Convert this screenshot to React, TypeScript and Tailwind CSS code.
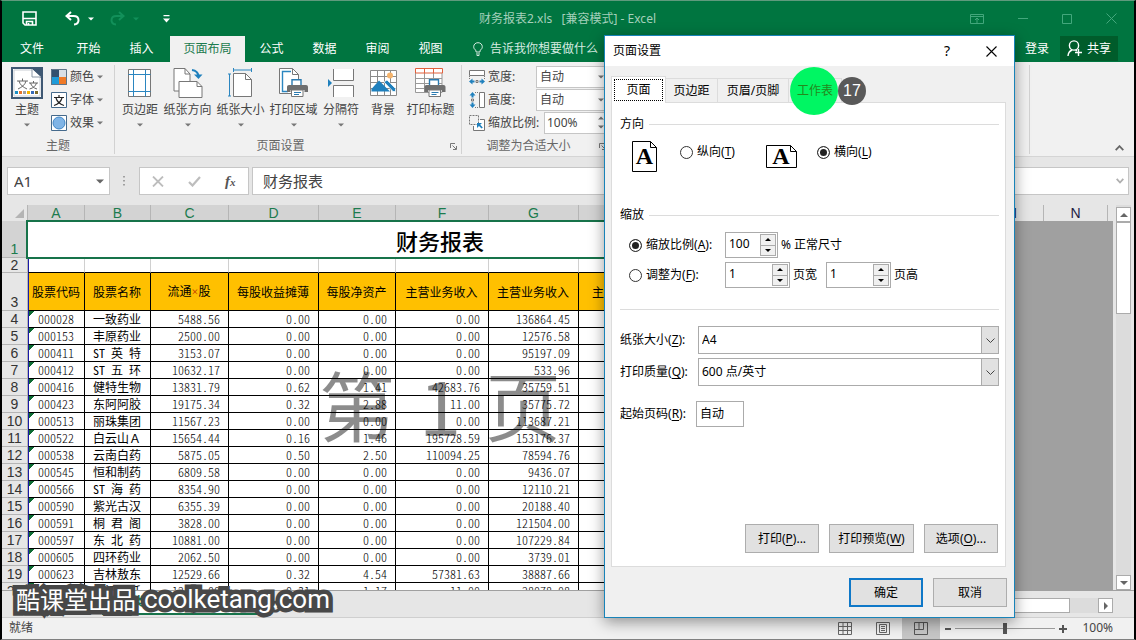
import type { ReactNode } from "react";
import clsx from "clsx";

const COLUMNS = ["A", "B", "C", "D", "E", "F", "G", "H", "I", "J", "K", "L", "M", "N"];

const HEADINGS = ["股票代码", "股票名称", "流通×股", "每股收益摊薄", "每股净资产", "主营业务收入", "主营业务收入", "主营业务利润", "", ""];

const ROWS = [
    ["000028", "一致药业", "5488.56", "0.00", "0.00", "0.00", "136864.45"],
    ["000153", "丰原药业", "2500.00", "0.00", "0.00", "0.00", "12576.58"],
    ["000411", "ST 英 特", "3153.07", "0.00", "0.00", "0.00", "95197.09"],
    ["000412", "ST 五 环", "10632.17", "0.00", "0.00", "0.00", "533.96"],
    ["000416", "健特生物", "13831.79", "0.62", "1.41", "42683.76", "35759.51"],
    ["000423", "东阿阿胶", "19175.34", "0.32", "2.88", "11.00", "35775.72"],
    ["000513", "丽珠集团", "11567.23", "0.00", "0.00", "0.00", "113687.21"],
    ["000522", "白云山Ａ", "15654.44", "0.16", "1.46", "195728.59", "153176.37"],
    ["000538", "云南白药", "5875.05", "0.50", "2.50", "110094.25", "78594.76"],
    ["000545", "恒和制药", "6809.58", "0.00", "0.00", "0.00", "9436.07"],
    ["000566", "ST 海 药", "8354.90", "0.00", "0.00", "0.00", "12110.21"],
    ["000590", "紫光古汉", "6355.39", "0.00", "0.00", "0.00", "20188.40"],
    ["000591", "桐 君 阁", "3828.00", "0.00", "0.00", "0.00", "121504.00"],
    ["000597", "东 北 药", "10881.00", "0.00", "0.00", "0.00", "107229.84"],
    ["000605", "四环药业", "2062.50", "0.00", "0.00", "0.00", "3739.01"],
    ["000623", "吉林敖东", "12529.66", "0.32", "4.54", "57381.63", "38887.66"],
    ["000650", "九江化纤", "12144.00", "0.31", "1.17", "11.00", "28078.08"],
];

const RIBBON_TABS = ["文件", "开始", "插入", "页面布局", "公式", "数据", "审阅", "视图"];

function Caret({ className }: { className?: string }) {
    return (
        <svg width="6" height="4" viewBox="0 0 6 4" className={className} fill="currentColor">
            <path d="M0 .5h6L3 3.5z" />
        </svg>
    );
}

/* ---------- Title bar + tabs ---------- */

function TitleBar() {
    return (
        <div className="flex h-[35px] items-center bg-[#007540] text-white">
            <button aria-label="保存" className="ml-5">
                <svg width="15" height="15" viewBox="0 0 15 15" fill="none" stroke="currentColor" strokeWidth="1.6">
                    <path d="M1 1h13v13H3L1 12z" />
                    <path d="M1 7.500h13M4.500 14v-3.500h6V14" />
                    <path d="M6.500 12v2" />
                </svg>
            </button>
            <button aria-label="撤消" className="ml-7">
                <svg width="15" height="15" viewBox="0 0 15 15" fill="none" stroke="currentColor" strokeWidth="2">
                    <path d="M6 1L1.500 5 6 9" />
                    <path d="M2 5h6.500c3 0 5 1.500 5 4.300 0 2.500-2 4-4.500 4.200" />
                </svg>
            </button>
            <Caret className="ml-2" />
            <button aria-label="恢复" className="ml-4 text-[#12905a]">
                <svg width="15" height="15" viewBox="0 0 15 15" fill="none" stroke="currentColor" strokeWidth="2">
                    <path d="M9 1l4.500 4L9 9" />
                    <path d="M13 5H6.500c-3 0-5 1.500-5 4.300 0 2.500 2 4 4.500 4.200" />
                </svg>
            </button>
            <Caret className="ml-2 text-[#12905a]" />
            <button aria-label="自定义快速访问工具栏" className="ml-6">
                <svg width="7" height="8" viewBox="0 0 7 8" fill="currentColor">
                    <path d="M.5 0h6v1.300h-6zM0 3.500h7L3.500 7.500z" />
                </svg>
            </button>
            <h1 className="ml-auto mr-[314px] whitespace-pre text-xs text-[#a4d0bb]">财务报表2.xls&nbsp;&nbsp; [兼容模式] - Excel</h1>
            <div className="mr-[17px] flex items-center gap-[34px] text-[#43a77c]">
                <svg width="14" height="10" viewBox="0 0 14 10" fill="none" stroke="currentColor">
                    <path d="M.5.5h13v9H.5zM.5 2.500h13M7 9V4.500M5 6l2-2 2 2" />
                </svg>
                <svg width="10" height="10" viewBox="0 0 10 10" stroke="currentColor"><path d="M0 4.500h10" /></svg>
                <svg width="10" height="10" viewBox="0 0 10 10" fill="none" stroke="currentColor"><path d="M.5.5h9v9h-9z" /></svg>
                <svg width="11" height="11" viewBox="0 0 11 11" stroke="currentColor"><path d="M.5.5l10 10M10.500.5l-10 10" /></svg>
            </div>
        </div>
    );
}

function TabBar() {
    return (
        <nav className="flex h-[26px] items-stretch bg-[#007540] text-xs text-white">
            {RIBBON_TABS.map((tab) => (
                <a
                    key={tab}
                    href="#"
                    className={clsx(
                        "flex items-center justify-center",
                        tab === "文件" ? "w-[60px]" : tab === "页面布局" ? "ml-0.5 w-[75px]" : "w-[53px]",
                        tab === "页面布局" && "bg-[#f1f1f1] text-[#1c7b4e]"
                    )}
                >
                    {tab}
                </a>
            ))}
            <a href="#" className="ml-4 flex items-center gap-[7px] text-[#d5ebe0]">
                <svg width="10" height="14" viewBox="0 0 10 14" fill="none" stroke="currentColor">
                    <path d="M3 10V8.500C1.500 7.500.7 6.300.7 4.700.7 2.300 2.600.7 5 .7s4.300 1.600 4.300 4c0 1.600-.8 2.800-2.300 3.800V10zM3 12h4M3.700 13.500h2.600" />
                </svg>
                告诉我你想要做什么
            </a>
            <a href="#" className="ml-auto flex items-center">登录</a>
            <button className="mb-px ml-[11px] mr-4 flex w-[58px] items-center justify-center gap-1 bg-[#005c2b]">
                <svg width="16" height="17" viewBox="0 0 16 17" fill="none" stroke="currentColor" strokeWidth="1.400">
                    <circle cx="7" cy="5.500" r="4.600" />
                    <path d="M1 16c.2-3 1.700-5 4-6M8.500 10l1.500.8M8 12.500h7M11.500 9v7" />
                </svg>
                共享
            </button>
        </nav>
    );
}

/* ---------- Ribbon ---------- */

function BigButton({ label, wide, noCaret, children }: { label: string; wide?: boolean; noCaret?: boolean; children: ReactNode }) {
    return (
        <button className={clsx("flex flex-col items-center", wide ? "w-[53px]" : "w-[42px]")}>
            <span className="flex h-9 items-center justify-center">{children}</span>
            <span className="h-[18px] whitespace-nowrap leading-[18px]">{label}</span>
            {!noCaret && <Caret className="mt-1 text-[#777]" />}
        </button>
    );
}

function Launcher() {
    return (
        <svg width="7" height="7" viewBox="0 0 7 7" fill="none" stroke="#777">
            <path d="M.5 5V.5H5M2.500 2.500l3.500 3.500M6.500 3v3.500H3" />
        </svg>
    );
}

function Printer({ x, y }: { x: number; y: number }) {
    return (
        <g transform={`translate(${x} ${y})`}>
            <path d="M5 .7h9V7H5z" fill="#fff" stroke="#2a7ab0" strokeWidth="1.400" />
            <path d="M2 6h17c1.200 0 2 .8 2 2v5h-3.500v-2h-14v2H0V8c0-1.200.8-2 2-2z" fill="#6f6f6f" />
            <path d="M4.500 11h11.500v6.500H4.500z" fill="#fff" stroke="#777" />
            <path d="M7 13.500h7M7 15.500h5" stroke="#2a7ab0" />
        </g>
    );
}

function ThemeGroup() {
    return (
        <div className="flex w-[113px] flex-col border-r border-[#d2d2d2]">
            <div className="flex h-[70px]">
                <button className="ml-[9px] flex w-8 flex-col items-center">
                    <svg width="32" height="32" viewBox="0 0 32 32" className="mb-0.5 mt-0.5">
                        <path d="M1 1h30v30H1z" fill="#fff" stroke="#3f5873" strokeWidth="2" />
                        <path d="M3 3h26v26H3z" fill="none" stroke="#c9ced4" />
                        <path d="M21 2h9v9z" fill="#3f5873" />
                        <path d="M21 2v8h9" fill="#fff" stroke="#8a97a5" />
                        <path d="M6 14h11M11.500 11.500V14M8 14c1 4 4 6 8 8M15 14c-1 4-4 6-8 8M18 16h9M22.500 14v2M19.500 16c1 3 3 5 6.500 6M25.500 16c-1 3-3 5-7 6" fill="none" stroke="#666" />
                        <path d="M4 24h3v3H4z" fill="#1b8fc4" />
                        <path d="M8 24h3v3H8z" fill="#e8762c" />
                        <path d="M12 24h3v3h-3z" fill="#a0a0a0" />
                        <path d="M16 24h3v3h-3z" fill="#f4b400" />
                        <path d="M20 24h3v3h-3z" fill="#3569b8" />
                        <path d="M24 24h3v3h-3z" fill="#7a6a2a" />
                    </svg>
                    <span className="h-[18px] leading-[18px]">主题</span>
                    <Caret className="mt-1 text-[#777]" />
                </button>
                <div className="ml-2 flex flex-col">
                    <button className="flex h-[23px] items-center gap-[3px]">
                        <svg width="16" height="16" viewBox="0 0 16 16">
                            <path d="M0 0h8v8H0z" fill="#33516f" /><path d="M8 0h8v8H8z" fill="#d9dfe6" />
                            <path d="M0 8h8v8H0z" fill="#1f9bd8" /><path d="M8 8h8v8H8z" fill="#f07a28" />
                            <path d="M.5.5h15v15H.5z" fill="none" stroke="#5f7488" />
                        </svg>
                        颜色<Caret className="text-[#777]" />
                    </button>
                    <button className="flex h-[23px] items-center gap-[3px]">
                        <svg width="16" height="16" viewBox="0 0 16 16" fill="none">
                            <path d="M.5.5h15v15H.5z" fill="#fff" stroke="#456a8c" />
                            <path d="M3 5.500h10M8 3v2.500M5 6c1 3.500 3.500 6 8 7.500M11 6c-1 3.500-3.500 6-8 7.500" stroke="#222" strokeWidth="1.200" />
                        </svg>
                        字体<Caret className="text-[#777]" />
                    </button>
                    <button className="flex h-[23px] items-center gap-[3px]">
                        <svg width="16" height="16" viewBox="0 0 16 16">
                            <path d="M.5.5h15v15H.5z" fill="#fff" stroke="#456a8c" />
                            <circle cx="8" cy="8" r="6" fill="#7fb4e6" stroke="#3f86c6" />
                        </svg>
                        效果<Caret className="text-[#777]" />
                    </button>
                </div>
            </div>
            <div className="mt-auto h-4 text-center leading-4 text-[#666]">主题</div>
        </div>
    );
}

function PageSetupGroup() {
    return (
        <div className="flex w-[347px] flex-col border-r border-[#d2d2d2]">
            <div className="ml-1 flex">
                <BigButton label="页边距">
                    <svg width="24" height="28" viewBox="0 0 24 28" fill="none">
                        <path d="M.5.5h22v27H.5z" fill="#fff" stroke="#777" />
                        <path d="M5.500.5v27M17.500.5v27M.5 5.500h22M.5 22.500h22" stroke="#2b86c0" />
                    </svg>
                </BigButton>
                <BigButton label="纸张方向" wide>
                    <svg width="30" height="30" viewBox="0 0 30 30" fill="#fff" stroke="#777">
                        <path d="M1 .5h11l5 5.500v17H1z" /><path d="M12 .5V6h5" fill="none" />
                        <path d="M6 13.500h18l5 5v11H6z" /><path d="M24 13.500v5h5" fill="none" />
                        <path d="M19 2c4 .5 6 2.500 6.500 6" fill="none" stroke="#1f80bd" strokeWidth="2.200" />
                        <path d="M21 6.500h8.500L25.500 11z" fill="#1f80bd" stroke="none" />
                    </svg>
                </BigButton>
                <BigButton label="纸张大小" wide>
                    <svg width="25" height="30" viewBox="0 0 25 30" fill="none">
                        <path d="M5.500 5.500h12l6 6v17h-18z" fill="#fff" stroke="#777" /><path d="M17.500 5.500v6h6" stroke="#777" />
                        <path d="M5.500 2h18M5.500 0v4M23.500 0v4M1.500 6v22M0 6h3M0 28h3" stroke="#2b86c0" />
                    </svg>
                </BigButton>
                <BigButton label="打印区域" wide>
                    <svg width="30" height="30" viewBox="0 0 30 30" fill="none">
                        <path d="M.5.5h13l6 6v19H.5z" fill="#fff" stroke="#777" /><path d="M13.500.5v6h6" stroke="#777" />
                        <path d="M12 3.500H3.500v20H9" stroke="#2b86c0" strokeWidth="1.400" />
                        <Printer x={8} y={11} />
                    </svg>
                </BigButton>
                <BigButton label="分隔符">
                    <svg width="27" height="28" viewBox="0 0 27 28" fill="none" stroke="#777">
                        <path d="M5.500 0v11.500h20V0" fill="#fff" /><path d="M5.500 28V16.500h20V28" fill="#fff" />
                        <path d="M0 10l4 4-4 4z" fill="#1f80bd" stroke="none" />
                    </svg>
                </BigButton>
                <BigButton label="背景" noCaret>
                    <svg width="27" height="26" viewBox="0 0 27 26" fill="none">
                        <path d="M.5.5h26v25H.5zM.5 6.500h26M.5 12.500h26M.5 18.500h26M7.500.5v25M14.500.5v25M20.500.5v25" fill="#fff" stroke="#8a8a8a" />
                        <circle cx="20" cy="5.500" r="3" fill="#f5b46c" />
                        <path d="M1.500 21.500V19L9 10.500l11 11z" fill="#1f80bd" />
                        <path d="M14 12l3-2 8.500 8.500v3H23z" fill="#1f80bd" stroke="#fff" strokeWidth=".7" />
                    </svg>
                </BigButton>
                <BigButton label="打印标题" wide noCaret>
                    <svg width="31" height="30" viewBox="0 0 31 30" fill="none">
                        <path d="M.5 5v19.500H27V5M.5 10.500H27M.5 15.500H27M.5 20.500H27M9.500 5v20M18.500 5v20" fill="#fff" stroke="#999" />
                        <path d="M.5.5h27v4.500H.5zM9.500.5V5M18.500.5V5" stroke="#e0603c" fill="#fff" />
                        <Printer x={9.5} y={11} />
                    </svg>
                </BigButton>
            </div>
            <div className="mt-auto flex h-4 items-center leading-4 text-[#666]">
                <span className="flex-1 pr-1 text-center">页面设置</span>
                <button aria-label="页面设置启动器" className="mr-1"><Launcher /></button>
            </div>
        </div>
    );
}

function ScaleGroup() {
    return (
        <div className="flex w-36 flex-col">
            <label className="flex h-[23px] items-center pl-[7px]">
                <svg width="16" height="16" viewBox="0 0 16 16" fill="none" stroke="#777">
                    <path d="M.5 1.500h15v5H.5z" fill="#fff" /><path d="M.5 7v3M15.500 7v3" strokeDasharray="1 1" />
                    <path d="M0 12.500l3.500-3v2h2v2h-2v2zM16 12.500l-3.500-3v2h-2v2h2v2z" fill="#1f80bd" stroke="none" />
                    <path d="M7 11.500h2v2H7z" />
                </svg>
                <span className="ml-[3px] w-12">宽度:</span>
                <select defaultValue="自动" className="h-[22px] flex-1 appearance-none border border-[#c6c6c6] bg-white px-[3px] leading-5">
                    <option>自动</option>
                </select>
                <Caret className="pointer-events-none -ml-2 mr-0.5 text-[#777]" />
            </label>
            <label className="flex h-[23px] items-center pl-[7px]">
                <svg width="16" height="16" viewBox="0 0 16 16" fill="none" stroke="#777">
                    <path d="M10.500.5h5v15h-5z" fill="#fff" /><path d="M6 .5h4M6 15.500h4" strokeDasharray="1 1" />
                    <path d="M3.500 0l3 3.500h-2v2h-2v-2h-2zM3.500 16l3-3.500h-2v-2h-2v2h-2z" fill="#1f80bd" stroke="none" />
                    <path d="M2.500 7h2v2h-2z" />
                </svg>
                <span className="ml-[3px] w-12">高度:</span>
                <select defaultValue="自动" className="h-[22px] flex-1 appearance-none border border-[#c6c6c6] bg-white px-[3px] leading-5">
                    <option>自动</option>
                </select>
                <Caret className="pointer-events-none -ml-2 mr-0.5 text-[#777]" />
            </label>
            <label className="flex h-[23px] items-center pl-[7px]">
                <svg width="16" height="16" viewBox="0 0 16 16" fill="none" stroke="#777">
                    <path d="M11 4.500h4.500v11h-11V11" fill="#fff" />
                    <path d="M.5.5h9v9h-9z" strokeDasharray="2 1" />
                    <path d="M8 8h5l-1.800 1.800 2.600 2.600-1.200 1.200L10 11l-2 2z" fill="#1f80bd" stroke="none" />
                </svg>
                <span className="ml-[3px] w-14">缩放比例:</span>
                <input defaultValue="100%" className="h-[22px] w-0 flex-1 border border-[#c6c6c6] bg-white px-0.5" />
                <svg width="6" height="13" viewBox="0 0 6 13" fill="#777" className="-ml-2 mr-0.5"><path d="M0 3.500h6L3 .5zM0 9.500h6l-3 3z" /></svg>
            </label>
            <div className="mt-auto flex h-4 items-center leading-4 text-[#666]">
                <span className="flex-1 pr-1 text-center">调整为合适大小</span>
                <button aria-label="调整启动器"><Launcher /></button>
            </div>
        </div>
    );
}

function Ribbon() {
    return (
        <div className="flex h-[95px] items-stretch border-b border-[#d5d5d5] bg-[#f1f1f1] pb-0.5 pt-[3px] text-xs text-[#444]">
            <ThemeGroup />
            <PageSetupGroup />
            <ScaleGroup />
            <div className="flex-1 border-r border-[#d2d2d2]" />
            <div className="flex w-[104px] items-end justify-end">
                <button aria-label="折叠功能区" className="mb-[3px] mr-2.5">
                    <svg width="9" height="6" viewBox="0 0 9 6" fill="none" stroke="#666" strokeWidth="1.800"><path d="M.7 5.200l3.800-4 3.800 4" /></svg>
                </button>
            </div>
        </div>
    );
}

/* ---------- Formula bar ---------- */

function FormulaBar() {
    return (
        <div className="flex h-12 items-center bg-[#e6e6e6] pl-[5px] pr-[5px] text-[15px] text-[#444]">
            <div className="flex h-7 w-[103px] items-center border border-[#c6c6c6] bg-white pr-[5px]">
                <input aria-label="名称框" defaultValue="A1" className="w-0 flex-1 pl-1.5" />
                <svg width="8" height="5" viewBox="0 0 8 5" fill="#666"><path d="M0 .5h8l-4 4z" /></svg>
            </div>
            <svg width="2" height="12" viewBox="0 0 2 12" fill="#a0a0a0" className="ml-[13px] mr-[14px]">
                <path d="M0 1h2v1.500H0zM0 5h2v1.500H0zM0 9h2v1.500H0z" />
            </svg>
            <div className="flex h-7 w-[110px] items-center border border-[#c6c6c6] bg-white pl-3">
                <svg width="12" height="11" viewBox="0 0 12 11" fill="none" stroke="#bdbdbd" strokeWidth="1.800"><path d="M1 .5l10 10M11 .5l-10 10" /></svg>
                <svg width="13" height="11" viewBox="0 0 13 11" fill="none" stroke="#bdbdbd" strokeWidth="2.200" className="ml-6"><path d="M1 6l3.500 3.500L12 1" /></svg>
                <span className="ml-6 font-['Liberation_Serif'] text-[15px] font-bold italic leading-none text-[#555]">f<span className="text-[11px]">x</span></span>
            </div>
            <div className="ml-[3px] flex h-7 flex-1 items-center border border-[#c6c6c6] bg-white pr-1">
                <input aria-label="编辑栏" defaultValue="财务报表" className="w-0 flex-1 pl-2.5" />
                <svg width="8" height="6" viewBox="0 0 8 6" fill="none" stroke="#b0b0b0" strokeWidth="1.800"><path d="M.7.8L4 4.500 7.300.8" /></svg>
            </div>
        </div>
    );
}

/* ---------- Sheet ---------- */

function RowHead({ n, active, low }: { n: number; active?: boolean; low?: boolean }) {
    return (
        <th
            className={clsx(
                "border-b border-r border-[#b5b5b5] p-0 text-center font-['Liberation_Sans'] text-sm font-normal leading-[14px]",
                active ? "bg-[#d3d3d3] text-[#1c7b4e]" : "bg-[#e6e6e6] text-[#333]",
                low ? "pb-px align-bottom" : "align-middle"
            )}
        >
            {n}
        </th>
    );
}

function Grid() {
    return (
        <div className="relative h-full flex-1 overflow-hidden bg-[#a0a0a0]">
            <table className="w-full table-fixed border-separate border-spacing-0 font-['Noto_Sans_CJK_SC',sans-serif] text-xs text-black">
                <colgroup>
                    <col className="w-[26px]" />
                    <col className="w-[57px]" />
                    <col className="w-[66px]" />
                    <col className="w-[78px]" />
                    <col className="w-[90px]" />
                    <col className="w-[77px]" />
                    <col className="w-[93px]" />
                    <col className="w-[90px]" />
                    <col className="w-[100px]" />
                    <col className="w-[86px]" />
                    <col className="w-[87px]" />
                    <col className="w-[64px]" />
                    <col className="w-[63px]" />
                    <col className="w-[65px]" />
                    <col className="w-[64px]" />
                    <col />
                </colgroup>
                <thead>
                    <tr className="font-['Liberation_Sans'] text-sm leading-4">
                        <th className="h-4 border-r border-[#b5b5b5] bg-[#e6e6e6] p-0">
                            <svg width="9" height="9" viewBox="0 0 9 9" fill="#b4b4b4" className="ml-auto mr-[3px]"><path d="M9 0v9H0z" /></svg>
                        </th>
                        {COLUMNS.map((c, i) => (
                            <th key={c} className={clsx("border-r border-[#b5b5b5] p-0 font-normal", i < 10 ? "bg-[#d3d3d3] text-[#1c7b4e]" : "bg-[#e6e6e6] text-[#222244]")}>
                                {c}
                            </th>
                        ))}
                        <th className="bg-[#e6e6e6] p-0" />
                    </tr>
                </thead>
                <tbody>
                    <tr>
                        <RowHead n={1} active low />
                        <td colSpan={10} className="relative h-[37px] bg-white p-0 text-center text-[22px] font-medium leading-9">
                            财务报表
                            <span className="absolute -bottom-px -left-0.5 -top-px right-0 border-2 border-[#17734a]" />
                        </td>
                        <td colSpan={5} rowSpan={ROWS.length + 3} className="p-0" />
                    </tr>
                    <tr>
                        <RowHead n={2} />
                        {HEADINGS.map((_, i) => (
                            <td key={i} className={clsx("h-[15px] border-b border-r border-b-black border-r-[#d0d0d0] bg-white p-0", i === 0 && "border-l border-l-[#1a1aa8]")} />
                        ))}
                    </tr>
                    <tr>
                        <RowHead n={3} low />
                        {HEADINGS.map((h, i) => (
                            <td key={i} className={clsx("h-[38px] whitespace-nowrap border-b border-r border-black bg-[#ffc000] p-0 pr-px text-center", i === 0 && "border-l border-l-[#1a1aa8]")}>
                                {h.split("×")[0]}
                                {h.includes("×") && <><span className="font-['Liberation_Serif'] text-[#c03000]">×</span>{h.split("×")[1]}</>}
                            </td>
                        ))}
                    </tr>
                    {ROWS.map((row, r) => (
                        <tr key={row[0]}>
                            <RowHead n={r + 4} />
                            {HEADINGS.map((_, i) => (
                                <td
                                    key={i}
                                    className={clsx(
                                        "h-[17px] whitespace-pre border-b border-r border-black bg-white p-0 leading-4",
                                        i === 0 && "border-l border-l-[#1a1aa8] bg-[linear-gradient(135deg,#0d6b33_4px,transparent_4px)]",
                                        i < 2 ? "pr-px text-center" : "pr-2 text-right",
                                        i !== 1 && "font-light",
                                        !row[i]?.includes("Ａ") && "[font-feature-settings:'hwid']"
                                    )}
                                >
                                    {row[i]}
                                </td>
                            ))}
                        </tr>
                    ))}
                </tbody>
            </table>

            {/* Page-break preview watermark */}
            <div className="pointer-events-none absolute left-[26px] top-[148px] flex w-[824px] justify-center gap-6 font-['Noto_Sans_CJK_SC',sans-serif] text-[76px] leading-[100px] text-black/45">
                <span>第</span>
                <span>1</span>
                <span>页</span>
            </div>
        </div>
    );
}

function Sheet() {
    return (
        <div className="flex min-h-0 flex-1 bg-[#e6e6e6]">
            <Grid />
            <div className="mx-[3px] flex w-[15px] flex-col bg-[#dcdcdc]">
                <button aria-label="向上滚动" className="mt-0.5 flex h-[15px] items-center justify-center border border-[#ababab] bg-white">
                    <svg width="8" height="4" viewBox="0 0 8 4" fill="#666"><path d="M0 4h8L4 0z" /></svg>
                </button>
                <div className="h-[92px] border border-[#ababab] bg-white" />
                <button aria-label="向下滚动" className="mt-auto flex h-[15px] items-center justify-center border border-[#ababab] bg-white">
                    <svg width="8" height="4" viewBox="0 0 8 4" fill="#666"><path d="M0 0h8L4 4z" /></svg>
                </button>
            </div>
        </div>
    );
}

function SheetTabs() {
    return (
        <div className="relative flex h-7 items-start border-y border-b-[#cfcfcf] border-t-[#a0a0a0] bg-[#e6e6e6]">
            <button className="ml-[100px] h-6 w-[156px] border-b-2 border-[#17734a] bg-white text-center text-xs font-bold leading-[22px] text-[#17734a]">
                ××类上市公司财务指标
            </button>
            <svg width="15" height="15" viewBox="0 0 15 15" fill="none" stroke="#777" className="ml-9 mt-1">
                <circle cx="7.500" cy="7.500" r="6.500" /><path d="M7.500 4v7M4 7.500h7" />
            </svg>
            <div className="ml-auto mr-[21px] mt-[7px] flex h-[15px] w-[500px] bg-[#dcdcdc]">
                <div className="mr-7 flex-1 border border-[#ababab] bg-white" />
                <button aria-label="向右滚动" className="flex w-[15px] items-center justify-center border border-[#ababab] bg-white">
                    <svg width="4" height="8" viewBox="0 0 4 8" fill="#666"><path d="M0 0v8l4-4z" /></svg>
                </button>
            </div>

            {/* Channel brand drawn across the tabs */}
            <div className="pointer-events-none absolute -top-[10px] left-[14px] flex items-center gap-2 whitespace-nowrap leading-9 text-white [-webkit-text-stroke:9px_#484848] [paint-order:stroke_fill] [stroke-linejoin:round]">
                <span className="font-['Noto_Sans_CJK_SC',sans-serif] text-2xl leading-9">酷课堂出品</span>
                <span className="font-[Roboto,sans-serif] text-[26px] leading-9">coolketang.com</span>
            </div>
        </div>
    );
}

function StatusBar() {
    return (
        <footer className="flex h-[21px] items-stretch bg-[#f1f1f1] text-xs leading-5 text-[#444]">
            <span className="ml-[7px]">就绪</span>
            <div className="ml-auto flex items-stretch">
                <button aria-label="普通" className="flex w-[38px] items-center justify-center">
                    <svg width="14" height="13" viewBox="0 0 14 13" fill="none" stroke="#666"><path d="M.5.5h13v12H.5zM.5 4.500h13M.5 8.500h13M5 .5v12M9.500.5v12" /></svg>
                </button>
                <button aria-label="页面布局" className="flex w-[38px] items-center justify-center">
                    <svg width="14" height="13" viewBox="0 0 14 13" fill="none" stroke="#666"><path d="M.5.5h13v12H.5zM3.500 2.500h7v8h-7zM5 4.500h4M5 6.500h4M5 8.500h4" /></svg>
                </button>
                <button aria-label="分页预览" className="flex w-[38px] items-center justify-center bg-[#c6c6c6]">
                    <svg width="14" height="13" viewBox="0 0 14 13" fill="none" stroke="#555"><path d="M.5.5h13v12H.5zM5 .5v7H.5M9.500.5v7H5" /></svg>
                </button>
                <button aria-label="缩小" className="ml-[5px] flex items-center"><svg width="6" height="2" viewBox="0 0 6 2" fill="#555"><path d="M0 0h6v2H0z" /></svg></button>
                <div className="relative mx-1 flex w-[100px] items-center justify-center">
                    <span className="absolute inset-x-0 h-px bg-[#9a9a9a]" />
                    <span className="relative h-[11px] w-1 bg-[#555]" />
                </div>
                <button aria-label="放大" className="flex items-center"><svg width="8" height="8" viewBox="0 0 8 8" fill="#555"><path d="M3 0h2v3h3v2H5v3H3V5H0V3h3z" /></svg></button>
            </div>
            <span className="ml-[15px] mr-[21px]">100%</span>
        </footer>
    );
}

/* ---------- Page setup dialog ---------- */

function Key({ children }: { children: string }) {
    return <>(<span className="underline underline-offset-2">{children}</span>)</>;
}

function Spin({ id, value, label, narrow }: { id: string; value: string; label: string; narrow?: boolean }) {
    return (
        <div className={clsx("flex h-[26px] border border-[#ababab] bg-white p-px", narrow ? "w-[53px]" : "w-[65px]")}>
            <input id={id} aria-label={label} defaultValue={value} className="w-0 flex-1 pb-0.5 pl-0.5" />
            <div className="flex w-4 flex-col">
                <button aria-label="增加" className="flex flex-1 items-center justify-center border border-[#ababab] bg-[#f0f0f0]">
                    <svg width="6" height="3" viewBox="0 0 6 3"><path d="M0 3h6L3 0z" /></svg>
                </button>
                <button aria-label="减少" className="flex flex-1 items-center justify-center border border-t-0 border-[#ababab] bg-[#f0f0f0]">
                    <svg width="6" height="3" viewBox="0 0 6 3"><path d="M0 0h6L3 3z" /></svg>
                </button>
            </div>
        </div>
    );
}

function Radio({ name, checked, children }: { name: string; checked?: boolean; children: ReactNode }) {
    return (
        <label className="flex items-center gap-1">
            <input
                type="radio"
                name={name}
                defaultChecked={checked}
                className="size-[13px] appearance-none rounded-full border border-[#333] bg-white checked:bg-[#222] checked:shadow-[inset_0_0_0_2px_white]"
            />
            {children}
        </label>
    );
}

function GroupTitle({ children }: { children: string }) {
    return (
        <h3 className="flex h-[18px] items-center gap-[5px]">
            {children}
            <span className="h-px flex-1 bg-[#dcdcdc]" />
        </h3>
    );
}

function SelectBox({ id, value }: { id: string; value: string }) {
    return (
        <div className="relative h-7 flex-1">
            <select id={id} defaultValue={value} className="h-7 w-full appearance-none border border-[#ababab] bg-white pl-[3px]">
                <option>{value}</option>
            </select>
            <span className="pointer-events-none absolute inset-y-0 right-0 flex w-[18px] items-center justify-center border border-[#ababab] bg-[#e1e1e1]">
                <svg width="9" height="5" viewBox="0 0 9 5" fill="none" stroke="#444"><path d="M.5.5l4 4 4-4" /></svg>
            </span>
        </div>
    );
}

const dialogButton = "h-[29px] border border-[#adadad] bg-[#e1e1e1]";

function PageSetupDialog() {
    return (
        <section role="dialog" aria-label="页面设置" className="absolute left-[602px] top-[34px] w-[411px] border border-[#1883b8] bg-[#f0f0f0] text-xs text-black shadow-[0_4px_14px_rgba(0,0,0,0.4)]">
            <header className="flex h-[30px] items-center bg-white pl-2 pr-[17px]">
                <h2 className="flex-1">页面设置</h2>
                <button aria-label="帮助" className="mr-9 text-sm">?</button>
                <button aria-label="关闭">
                    <svg width="11" height="11" viewBox="0 0 11 11" stroke="#000" strokeWidth="1.100"><path d="M.5.5l10 10M10.500.5l-10 10" /></svg>
                </button>
            </header>

            <div className="flex h-9 items-end pl-1.5">
                <button className="z-10 -mb-px h-[27px] w-[55px] border border-b-0 border-[#dcdcdc] bg-white p-0.5">
                    <span className="flex h-[22px] items-center justify-center border border-dotted border-black">页面</span>
                </button>
                <button className="h-6 w-[52px] border border-b-0 border-l-0 border-[#dcdcdc]">页边距</button>
                <button className="h-6 w-[71px] border border-b-0 border-l-0 border-[#dcdcdc]">页眉/页脚</button>
                <button className="relative h-6 w-[53px] border border-b-0 border-l-0 border-[#dcdcdc] text-[#238a1c]">
                    <span className="absolute -top-3 left-px size-12 rounded-full bg-[#00f663]" />
                    <span className="relative">工作表</span>
                    <span className="absolute -right-[25px] -top-0.5 flex size-7 items-center justify-center rounded-full bg-[#595959] font-['Liberation_Sans'] text-base text-white">17</span>
                </button>
            </div>

            <div className="mx-1.5 mr-2 h-[465px] border border-[#dcdcdc] bg-white pl-2 pr-1.5 pt-3">
                <GroupTitle>方向</GroupTitle>
                <div className="flex h-[73px] items-start pl-3 pt-2">
                    <svg width="26" height="32" viewBox="0 0 26 32" fill="none" stroke="#000">
                        <path d="M.5.5h18l6 6v24H.5z" /><path d="M18.500.5v6h6" />
                        <text x="12.500" y="23" textAnchor="middle" fontSize="24" fontWeight="bold" fontFamily="Liberation Serif" fill="#000" stroke="none">A</text>
                    </svg>
                    <div className="ml-[22px] mt-[3px] w-20"><Radio name="orient"><span>纵向<Key>T</Key></span></Radio></div>
                    <svg width="32" height="24" viewBox="0 0 32 24" fill="none" stroke="#000" className="ml-[6px] mt-1">
                        <path d="M.5.5h24l6 6v16H.5z" /><path d="M24.500.5v6h6" />
                        <text x="15" y="19" textAnchor="middle" fontSize="24" fontWeight="bold" fontFamily="Liberation Serif" fill="#000" stroke="none">A</text>
                    </svg>
                    <div className="ml-[19px] mt-[3px]"><Radio name="orient" checked><span>横向<Key>L</Key></span></Radio></div>
                </div>

                <GroupTitle>缩放</GroupTitle>
                <div className="mt-2 flex items-center pl-[9px]">
                    <div className="w-24"><Radio name="scale" checked><span>缩放比例<Key>A</Key>:</span></Radio></div>
                    <Spin id="percent" label="缩放百分比" value="100" narrow />
                    <span className="ml-[3px]">% 正常尺寸</span>
                </div>
                <div className="mt-1 flex items-center pl-[9px]">
                    <div className="w-24"><Radio name="scale"><span>调整为<Key>F</Key>:</span></Radio></div>
                    <Spin id="wide" label="页宽" value="1" />
                    <label htmlFor="wide" className="ml-[3px] mr-[9px]">页宽</label>
                    <Spin id="tall" label="页高" value="1" />
                    <label htmlFor="tall" className="ml-[3px]">页高</label>
                </div>

                <hr className="mt-[21px] border-[#dcdcdc]" />
                <div className="mt-4 flex items-center">
                    <label htmlFor="paper" className="w-[78px]">纸张大小<Key>Z</Key>:</label>
                    <SelectBox id="paper" value="A4" />
                </div>
                <div className="mt-1 flex items-center">
                    <label htmlFor="quality" className="w-[78px]">打印质量<Key>Q</Key>:</label>
                    <SelectBox id="quality" value="600 点/英寸" />
                </div>
                <div className="mt-[15px] flex items-center">
                    <label htmlFor="first" className="w-[76px]">起始页码<Key>R</Key>:</label>
                    <input id="first" defaultValue="自动" className="h-[26px] w-12 border border-[#ababab] pb-0.5 pl-[3px]" />
                </div>
                <div className="mt-[97px] flex justify-end gap-[10px] pr-px">
                    <button className={clsx(dialogButton, "w-[74px]")}>打印<Key>P</Key>...</button>
                    <button className={clsx(dialogButton, "w-[85px]")}>打印预览<Key>W</Key></button>
                    <button className={clsx(dialogButton, "w-[74px]")}>选项<Key>O</Key>...</button>
                </div>
            </div>

            <footer className="flex justify-end gap-[10px] pb-2.5 pr-[7px] pt-[11px]">
                <button className="h-[29px] w-[74px] border-2 border-[#0f78c8] bg-[#e1e1e1]">确定</button>
                <button className={clsx(dialogButton, "w-[74px]")}>取消</button>
            </footer>
        </section>
    );
}

export default function App() {
    return (
        <div className="relative flex h-screen flex-col overflow-hidden border-x-2 border-b border-t border-x-black border-b-[#808080] border-t-[#5f9a7d] font-['Noto_Sans','Noto_Sans_CJK_SC',sans-serif]">
            <TitleBar />
            <TabBar />
            <Ribbon />
            <FormulaBar />
            <Sheet />
            <SheetTabs />
            <StatusBar />
            <PageSetupDialog />
        </div>
    );
}
